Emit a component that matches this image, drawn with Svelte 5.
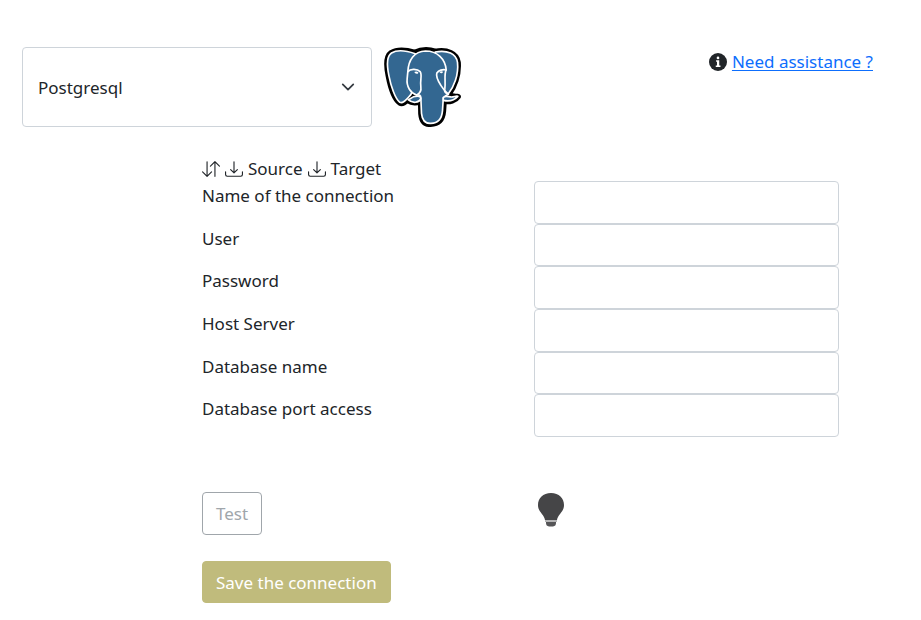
<script>
  const fields = [
    { id: 'connection-name', label: 'Name of the connection', type: 'text' },
    { id: 'user', label: 'User', type: 'text' },
    { id: 'password', label: 'Password', type: 'password' },
    { id: 'host', label: 'Host Server', type: 'text' },
    { id: 'database', label: 'Database name', type: 'text' },
    { id: 'port', label: 'Database port access', type: 'text' }
  ];
  let connector = $state('Postgresql');
</script>

{#snippet download()}
  <svg class="icon" viewBox="0 0 16 16" aria-hidden="true">
    <path d="M.5 9.9a.5.5 0 0 1 .5.5v2.5a1 1 0 0 0 1 1h12a1 1 0 0 0 1-1v-2.5a.5.5 0 0 1 1 0v2.5a2 2 0 0 1-2 2H2a2 2 0 0 1-2-2v-2.5a.5.5 0 0 1 .5-.5z" />
    <path d="M7.646 11.854a.5.5 0 0 0 .708 0l3-3a.5.5 0 0 0-.708-.708L8.5 10.293V1.5a.5.5 0 0 0-1 0v8.793L5.354 8.146a.5.5 0 1 0-.708.708l3 3z" />
  </svg>
{/snippet}

<main>
  <header>
    <div class="picker">
      <select aria-label="Connector" bind:value={connector}>
        <option>Postgresql</option>
      </select>
      <svg class="chevron" viewBox="0 0 16 16" aria-hidden="true">
        <path d="m2 5 6 6 6-6" fill="none" stroke="#343a40" stroke-width="2" stroke-linecap="round" stroke-linejoin="round" />
      </svg>
    </div>
    <svg class="logo" viewBox="27 20 230 240" role="img" aria-label="PostgreSQL">
      <g stroke="#000" stroke-width="18" stroke-linejoin="round" fill="#000">
        <path d="M118 37C91 29 65 28 48 38C32 49 34 76 40 105C46 137 59 176 74 187C84 193 93 180 107 168L137 172L138 220C140 241 149 252 166 251C188 250 202 237 204 212L206 182C224 185 241 180 248 169C239 170 229 170 220 162C237 140 251 104 248 66C244 39 217 28 180 34C160 27 136 29 118 37Z" />
        <path d="M100 181C111 189 129 189 139 178L137 168L119 170Z" />
      </g>
      <g fill="#336791" stroke="#fff" stroke-width="5" stroke-linejoin="round" stroke-linecap="round">
        <path d="M120 40C91 30 65 28 49 38C33 49 35 76 41 105C47 137 60 175 74 186C84 191 93 178 107 163L130 110Z" />
        <path d="M180 35C217 28 243 40 247 66C251 104 236 140 219 161L190 140Z" />
        <path d="M98 94C100 59 117 33 151 32C187 32 210 56 213 88C206 105 212 120 209 145C206 154 211 159 220 162C211 166 203 168 204 179L202 211C200 235 188 249 167 249C149 250 141 241 139 219L137 173C137 165 132 162 124 164C107 158 93 140 96 115Z" />
        <path d="M98 94C106 84 127 86 135 94C142 105 134 119 137 139C139 152 132 161 124 164" fill="none" />
        <path d="M213 89C203 85 190 91 185 98C181 110 190 124 197 135C206 149 211 154 218 161" fill="none" />
        <path d="M99 178C109 176 111 168 121 168C130 166 137 168 137 175C132 188 112 190 99 178Z" />
        <path d="M204 172C210 165 218 169 229 170C237 170 242 166 248 168C239 178 223 184 205 180Z" />
      </g>
      <path d="M117 95q8-4 13 2q-5 8-13-2zM193 96q5-6 11-2q-4 8-11 2z" fill="#fff" />
    </svg>
    <div class="help">
      <svg class="icon" viewBox="0 0 16 16" aria-hidden="true">
        <path d="M8 16A8 8 0 1 0 8 0a8 8 0 0 0 0 16z" />
        <path d="M6.3 6.5h2.8v4.7h1.1v1.3H6v-1.3h1.1V7.8h-.8z" fill="#fff" />
        <circle cx="8" cy="4.4" r="1.2" fill="#fff" />
      </svg>
      <a href="#help">Need assistance ?</a>
    </div>
  </header>

  <form onsubmit={(e) => e.preventDefault()}>
    <div class="direction">
      <svg class="icon" viewBox="0 0 16 16" aria-hidden="true">
        <path d="M11.5 15a.5.5 0 0 0 .5-.5V2.707l3.146 3.147a.5.5 0 0 0 .708-.708l-4-4a.5.5 0 0 0-.708 0l-4 4a.5.5 0 1 0 .708.708L11 2.707V14.5a.5.5 0 0 0 .5.5zm-7-14a.5.5 0 0 1 .5.5v11.793l3.146-3.147a.5.5 0 0 1 .708.708l-4 4a.5.5 0 0 1-.708 0l-4-4a.5.5 0 0 1 .708-.708L4 13.293V1.5a.5.5 0 0 1 .5-.5z" />
      </svg>
      {@render download()}
      <span>Source</span>
      {@render download()}
      <span>Target</span>
    </div>

    <div class="fields">
      {#each fields as field (field.id)}
        <label for={field.id}>{field.label}</label>
        <input id={field.id} type={field.type} />
      {/each}
    </div>

    <div class="test">
      <div><button type="button" class="outline" disabled>Test</button></div>
      <svg class="bulb" viewBox="0 0 28 36" role="img" aria-label="Connection status">
        <path d="M14 1C6 1 1 6 1 13c0 7 6 9 7 15h12c1-6 7-8 7-15C27 6 22 1 14 1z" fill="#454547" />
        <path d="M8 28h12v2H8z" fill="#b5b5b6" />
        <path d="M9 30h10v1q0 3-3 3.500h-4q-3-.5-3-3.500z" fill="#555557" />
      </svg>
    </div>
    <button type="submit" class="save" disabled>Save the connection</button>
  </form>
</main>

<style>
  :global(body) {
    margin: 0;
    background: #fff;
  }
  main {
    padding: 47px 48px 16px 22px;
    color: #212529;
    font: 17px/27px "Segoe UI", "Noto Sans", "Open Sans", sans-serif;
  }
  select, input, button {
    box-sizing: border-box;
    margin: 0;
    font: inherit;
    border: 1px solid #ced4da;
    border-radius: 4px;
    background: #fff;
  }
  header {
    display: flex;
    align-items: flex-start;
  }
  .picker {
    display: grid;
    align-items: center;
    width: 350px;
  }
  .picker > * {
    grid-area: 1 / 1;
  }
  select {
    appearance: none;
    width: 100%;
    height: 80px;
    padding: 0 40px 0 15px;
    color: inherit;
  }
  .chevron {
    justify-self: end;
    width: 14px;
    height: 14px;
    margin-right: 17px;
    pointer-events: none;
  }
  .logo {
    width: 77px;
    height: 80px;
    margin-left: 12px;
  }
  .icon {
    width: 18px;
    height: 18px;
    flex: none;
    fill: currentColor;
  }
  .help {
    display: flex;
    align-items: center;
    gap: 5px;
    margin-left: auto;
    padding-top: 1px;
  }
  a {
    color: #0d6efd;
    text-underline-offset: 2px;
  }
  form {
    padding: 28px 34px 0 180px;
  }
  .direction {
    display: flex;
    align-items: center;
    gap: 5px;
    height: 26px;
  }
  .direction .icon {
    margin-top: 2px;
  }
  .fields {
    display: grid;
    grid-template-columns: 332px minmax(0, 1fr);
    grid-template-rows: repeat(6, 1fr);
    height: 256px;
    margin-bottom: 55px;
  }
  label {
    padding-top: 1px;
  }
  input {
    width: 100%;
    height: 100%;
    min-width: 0;
    padding: 6px 12px;
  }
  .test {
    display: grid;
    grid-template-columns: 332px minmax(0, 1fr);
    margin-bottom: 26px;
  }
  button {
    height: 43px;
    padding: 0 13px;
  }
  .outline {
    display: block;
    border-color: #a0a6ab;
    color: #a0a6ab;
  }
  .bulb {
    width: 28px;
    height: 36px;
    margin-left: 3px;
  }
  .save {
    display: block;
    height: 42px;
    border-color: #c0bb7c;
    background: #c0bb7c;
    color: #fff;
  }
</style>
